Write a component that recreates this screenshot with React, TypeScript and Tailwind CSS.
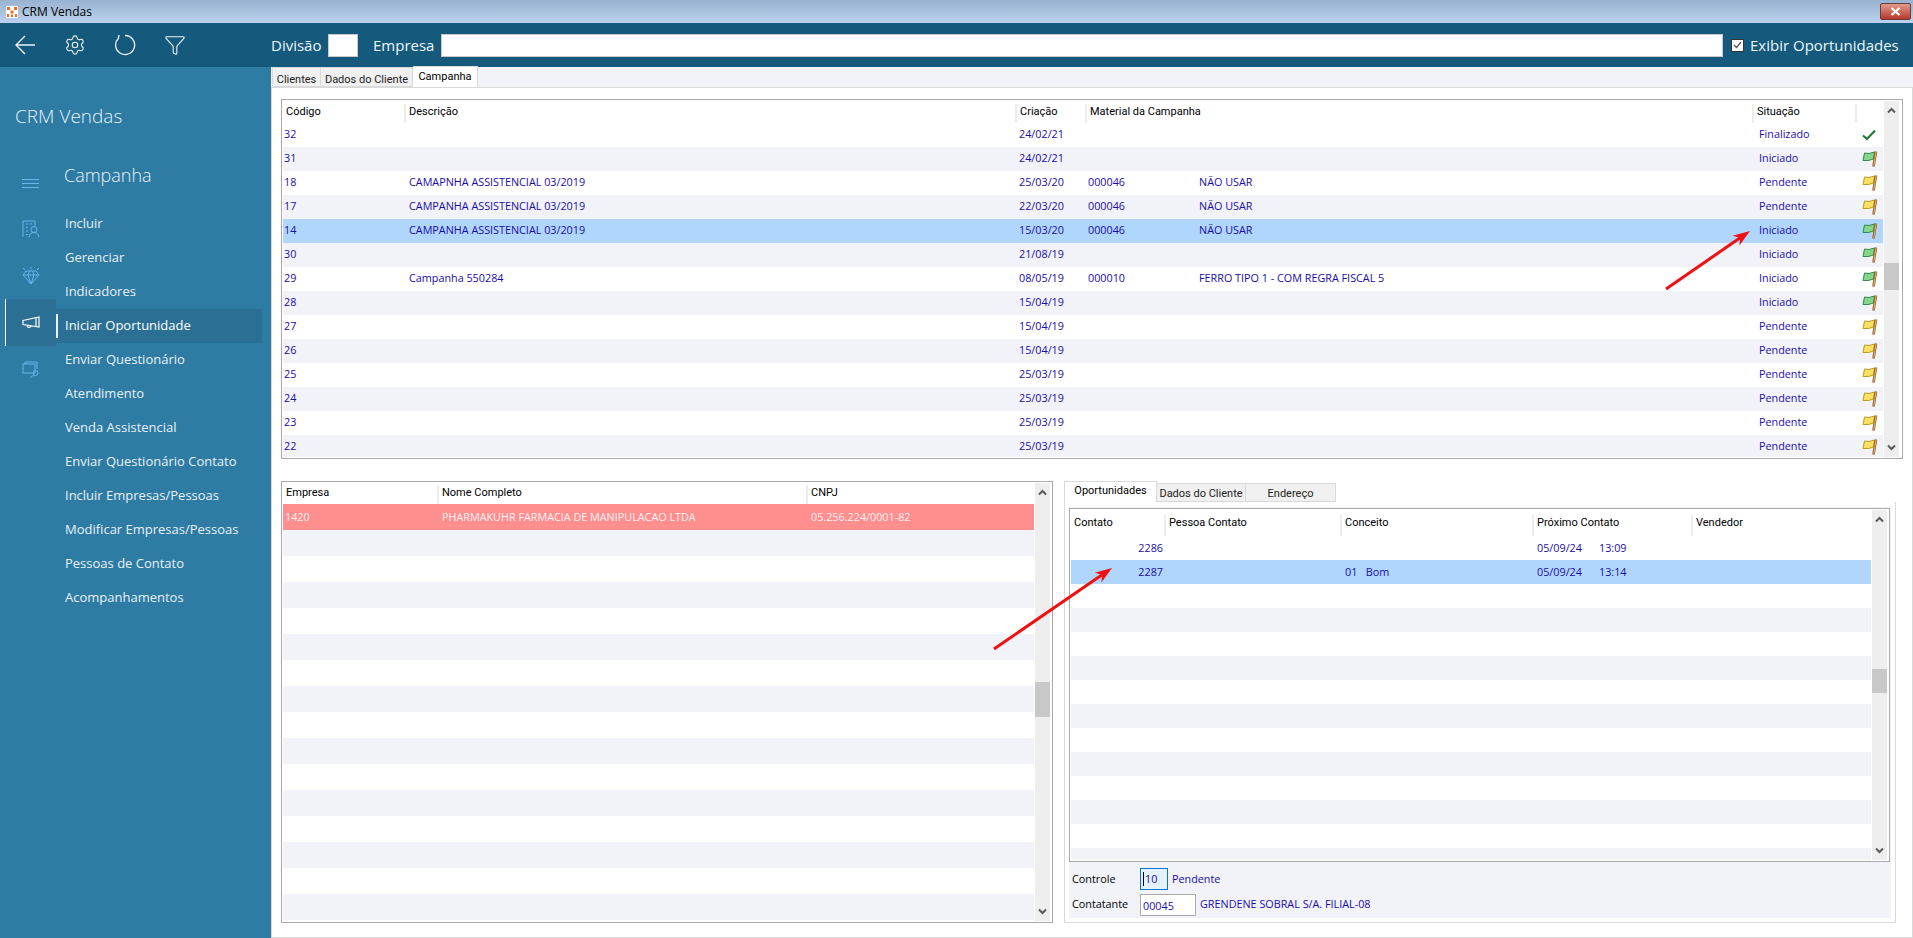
import React from "react";
import { Settings, Funnel } from "lucide-react";

const Flag = ({ color }: { color: "green" | "yellow" }) => (
  <svg width="16" height="16" viewBox="0 0 16 16" className="block">
    <path d="M2.500 2 L7 2.500 L12.500 1 L11.500 8 L6.500 9.500 L1 9.500 Z" fill={color === "green" ? "#86d68a" : "#f8e060"} stroke={color === "green" ? "#2f8a4d" : "#c09a20"} strokeWidth="1" />
    <path d="M14 .5 L11.500 15.500" stroke="#8a5a22" strokeWidth="2.600" />
    <path d="M14 1 L11.800 15" stroke="#eeb070" strokeWidth="1.100" />
  </svg>
);

const Check = () => (
  <svg width="14" height="12" viewBox="0 0 14 12" className="block">
    <path d="M1 6.500 L5 10 L13 1.500" fill="none" stroke="#1f7a2c" strokeWidth="2" />
  </svg>
);

const Chevron = ({ down }: { down?: boolean }) => (
  <svg width="9" height="7" viewBox="0 0 9 7" className="block mx-auto shrink-0">
    <path d={down ? "M1 1.500 L4.500 5 L8 1.500" : "M1 5.500 L4.500 2 L8 5.500"} fill="none" stroke="#5a5a5a" strokeWidth="2" />
  </svg>
);

const Scrollbar = ({ thumb }: { thumb: string }) => (
  <div className="w-[15px] h-full bg-[#eeeeee] flex flex-col shrink-0 pt-[6px] pb-[6px]">
    <Chevron />
    <div className={thumb + " bg-[#c8c8c8] w-full shrink-0"} />
    <div className="flex-1" />
    <Chevron down />
  </div>
);

const Head = ({ cols, labels, h }: { cols: string; labels: string[]; h: string }) => (
  <div className={"grid " + cols + " " + h + " bg-white text-black shrink-0 font-['Roboto',sans-serif] text-[11px]"}>
    {labels.map((l, i) => (
      <div key={i} className="border-r-2 border-[#ececec] pl-[3px] leading-[16px] whitespace-nowrap overflow-hidden last:border-r-0">{l}</div>
    ))}
  </div>
);

const rowTone = (i: number, selected?: boolean) =>
  selected ? "bg-[#b0d6fd]" : i % 2 === 1 ? "bg-[#f1f3f8]" : "bg-white";

type Camp = [string, string, string, string, string, string];
const campaigns: Camp[] = [
  ["32", "", "24/02/21", "", "", "Finalizado"],
  ["31", "", "24/02/21", "", "", "Iniciado"],
  ["18", "CAMAPNHA ASSISTENCIAL 03/2019", "25/03/20", "000046", "NÃO USAR", "Pendente"],
  ["17", "CAMPANHA ASSISTENCIAL 03/2019", "22/03/20", "000046", "NÃO USAR", "Pendente"],
  ["14", "CAMPANHA ASSISTENCIAL 03/2019", "15/03/20", "000046", "NÃO USAR", "Iniciado"],
  ["30", "", "21/08/19", "", "", "Iniciado"],
  ["29", "Campanha 550284", "08/05/19", "000010", "FERRO TIPO 1 - COM REGRA FISCAL 5", "Iniciado"],
  ["28", "", "15/04/19", "", "", "Iniciado"],
  ["27", "", "15/04/19", "", "", "Pendente"],
  ["26", "", "15/04/19", "", "", "Pendente"],
  ["25", "", "25/03/19", "", "", "Pendente"],
  ["24", "", "25/03/19", "", "", "Pendente"],
  ["23", "", "25/03/19", "", "", "Pendente"],
  ["22", "", "25/03/19", "", "", "Pendente"],
];

const menu = ["Incluir", "Gerenciar", "Indicadores", "Iniciar Oportunidade", "Enviar Questionário", "Atendimento", "Venda Assistencial", "Enviar Questionário Contato", "Incluir Empresas/Pessoas", "Modificar Empresas/Pessoas", "Pessoas de Contato", "Acompanhamentos"];

const railStroke = "#69b6ee";

const RailIcons = () => (
  <div className="w-[51px] ml-[5px] shrink-0 flex flex-col">
    <div className="h-[43px] flex items-center justify-center pt-[1px]">
      <svg width="18" height="10" viewBox="0 0 18 10" className="block"><path d="M0 .5H17M0 4.500H17M0 8.500H17" stroke={railStroke} /></svg>
    </div>
    <div className="h-[47px] flex items-center justify-center">
      <svg width="18" height="18" viewBox="0 0 18 18" className="block" fill="none" stroke={railStroke}><path d="M1 17V1H13V6M4 4h2M8 4h2M4 7.500h2M4 11h2M4 14.500h2" /><circle cx="12" cy="9.500" r="3" /><path d="M7 17c.5-3 2.500-4.500 5-4.500s4.500 1.500 5 4.500" /></svg>
    </div>
    <div className="h-[47px] flex items-center justify-center">
      <svg width="18" height="18" viewBox="0 0 18 18" className="block" fill="none" stroke={railStroke}><path d="M4 4H14L17 8L9 17L1 8ZM1 8H17M6 8L9 17L12 8M6 8L7.500 4M12 8L10.500 4" /><path d="M1 1L3 3M17 1L15 3M9 0V2" /></svg>
    </div>
    <div className="h-[47px] bg-[#2b6f94] border-l border-white flex items-center justify-center">
      <svg width="18" height="14" viewBox="0 0 18 14" className="block" fill="none" stroke="#ffffff" strokeWidth="1.200"><path d="M1 4.500L17 1V11L1 8.500ZM1 4.500V8.500M5 9.500C5 12 9 12 9 10M14 2V10.500" /></svg>
    </div>
    <div className="h-[47px] flex items-center justify-center">
      <svg width="18" height="18" viewBox="0 0 18 18" className="block" fill="none" stroke={railStroke}><path d="M3 3V1H15V8M1 3H13V12H1Z" /><circle cx="13.500" cy="12" r="2.500" /><path d="M11.500 14L8 17" /></svg>
    </div>
  </div>
);

const Sidebar = () => (
  <aside className="w-[271px] shrink-0 bg-[#2e7ba3] text-[#e8f2f7] flex flex-col">
    <div className="pl-[15px] pt-[35px] h-[95px] text-[19px] font-light leading-[28px]">CRM Vendas</div>
    <div className="flex">
      <RailIcons />
      <div className="flex-1 pr-[9px]">
        <div className="h-[45px] pl-[8px] text-[18px] font-light leading-[24px] pt-[1px]">Campanha</div>
        {menu.map((m, i) => (
          <div key={m} className={"h-[34px] leading-[32px] text-[13px] whitespace-nowrap " + (i === 3 ? "bg-[#2b6f94] text-white py-[5px] flex items-center" : "pl-[9px]")}>
            {i === 3 ? <><span className="w-[2px] h-[24px] bg-[#e8f2f7] mr-[7px]" /><span className="mb-[2px]">{m}</span></> : m}
          </div>
        ))}
      </div>
    </div>
  </aside>
);

const TopBar = () => (
  <div className="h-[44px] bg-[#155a7c] text-[#edf5f9] flex items-center shrink-0">
    <div className="w-[271px] shrink-0 flex items-center pl-[14px] gap-[28px]">
      <svg width="22" height="22" viewBox="0 0 22 22" className="block" fill="none" stroke="currentColor" strokeWidth="1.400"><path d="M21 11H2M11 2L2 11L11 20" /></svg>
      <Settings size={22} strokeWidth={1.200} />
      <svg width="22" height="22" viewBox="0 0 22 22" className="block" fill="none" stroke="currentColor" strokeWidth="1.300"><path d="M11 1.500A9.500 9.500 0 1 1 4.500 4.200M4.300 4.500L5 1" /></svg>
      <Funnel size={22} strokeWidth={1.200} />
    </div>
    <span className="text-[15px] w-[51px]">Divisão</span>
    <div className="ml-[6px] w-[30px] h-[23px] bg-white border border-[#c8c8c8]" />
    <span className="text-[15px] ml-[15px] w-[62px]">Empresa</span>
    <div className="ml-[6px] w-[1282px] h-[23px] bg-white border border-[#c8c8c8]" />
    <div className="ml-[8px] w-[13px] h-[13px] bg-white border border-[#333333] flex items-center justify-center">
      <svg width="9" height="8" viewBox="0 0 9 8" className="block"><path d="M1 4L3.500 6.500L8 1" fill="none" stroke="#555555" strokeWidth="1.300" /></svg>
    </div>
    <span className="text-[15px] ml-[6px] whitespace-nowrap">Exibir Oportunidades</span>
  </div>
);

const Tab = ({ label, active, cls }: { label: string; active?: boolean; cls: string }) => (
  <div className={cls + " text-center whitespace-nowrap font-['Roboto',sans-serif] text-[11px] border-r border-t border-[#d9d9d9] " + (active ? "bg-white text-black leading-[18px]" : "bg-[#f0f0f0] text-[#222222] leading-[20px] border-b")}>{label}</div>
);

const CampaignGrid = () => {
  const cols = "grid-cols-[123px_611px_70px_667px_103px_26px]";
  return (
    <div className="h-[360px] border border-[#a9a9a9] bg-white flex p-[1px] shrink-0">
      <div className="w-[1600px] flex flex-col overflow-hidden">
        <div className="h-[22px] pt-[3px] shrink-0">
          <Head cols={cols} h="h-[19px]" labels={["Código", "Descrição", "Criação", "Material da Campanha", "Situação", ""]} />
        </div>
        {campaigns.map((c, i) => (
          <div key={c[0]} className={"grid " + cols + " h-[24px] shrink-0 leading-[22px] text-[#1a0ca6] whitespace-nowrap " + rowTone(i, c[0] === "14")}>
            <div className="pl-[1px]">{c[0]}</div>
            <div className="pl-[3px]">{c[1]}</div>
            <div className="pl-[2px]">{c[2]}</div>
            <div className="flex"><span className="w-[112px] pl-[1px]">{c[3]}</span><span>{c[4]}</span></div>
            <div className="pl-[5px]">{c[5]}</div>
            <div className="flex items-center pl-[5px]">
              {c[5] === "Finalizado" ? <Check /> : <Flag color={c[5] === "Iniciado" ? "green" : "yellow"} />}
            </div>
          </div>
        ))}
      </div>
      <div className="ml-[1px]"><Scrollbar thumb="mt-[149px] h-[27px]" /></div>
    </div>
  );
};

const CompanyGrid = () => {
  const cols = "grid-cols-[156px_369px_226px]";
  return (
    <div className="w-[772px] h-full border border-[#a9a9a9] bg-white flex p-[1px] shrink-0">
      <div className="w-[751px] flex flex-col overflow-hidden">
        <div className="h-[21px] pt-[2px] shrink-0">
          <Head cols={cols} h="h-[19px]" labels={["Empresa", "Nome Completo", "CNPJ"]} />
        </div>
        <div className={"grid " + cols + " h-[26px] shrink-0 leading-[26px] bg-[#ff8f8f] text-[#fff0f0] whitespace-nowrap"}>
          <div className="pl-[2px]">1420</div>
          <div className="pl-[3px]">PHARMAKUHR FARMACIA DE MANIPULACAO LTDA</div>
          <div className="pl-[3px]">05.256.224/0001-82</div>
        </div>
        {Array.from({ length: 15 }).map((_, i) => (
          <div key={i} className={"h-[26px] shrink-0 " + rowTone(i + 1)} />
        ))}
      </div>
      <div className="ml-[1px]"><Scrollbar thumb="mt-[186px] h-[35px]" /></div>
    </div>
  );
};

const ContactGrid = () => {
  const cols = "grid-cols-[95px_176px_192px_159px_178px]";
  return (
    <div className="h-[354px] border border-[#a9a9a9] bg-white flex p-[1px] shrink-0">
      <div className="w-[800px] flex flex-col overflow-hidden">
        <div className="h-[26px] pt-[5px] shrink-0">
          <Head cols={cols} h="h-[21px]" labels={["Contato", "Pessoa Contato", "Conceito", "Próximo Contato", "Vendedor"]} />
        </div>
        <div className={"grid " + cols + " h-[24px] shrink-0 leading-[24px] text-[#1a0ca6] whitespace-nowrap bg-white"}>
          <div className="text-right pr-[3px]">2286</div><div /><div />
          <div className="pl-[3px] flex"><span className="w-[62px]">05/09/24</span><span>13:09</span></div><div />
        </div>
        <div className={"grid " + cols + " h-[24px] shrink-0 leading-[24px] text-[#1a0ca6] whitespace-nowrap bg-[#b0d6fd]"}>
          <div className="text-right pr-[3px]">2287</div><div />
          <div className="pl-[3px]">01&nbsp;&nbsp;&nbsp;Bom</div>
          <div className="pl-[3px] flex"><span className="w-[62px]">05/09/24</span><span>13:14</span></div><div />
        </div>
        {Array.from({ length: 12 }).map((_, i) => (
          <div key={i} className={"h-[24px] shrink-0 " + rowTone(i + 2)} />
        ))}
      </div>
      <div className="ml-[1px]"><Scrollbar thumb="mt-[146px] h-[24px]" /></div>
    </div>
  );
};

const ContactPanel = () => (
  <div className="w-[832px] h-full flex flex-col shrink-0">
    <div className="flex items-end h-[21px] shrink-0">
      <Tab label="Oportunidades" active cls="w-[93px] h-[21px] border-l" />
      <Tab label="Dados do Cliente" cls="w-[89px] h-[19px]" />
      <Tab label="Endereço" cls="w-[90px] h-[19px]" />
    </div>
    <div className="flex-1 border border-t-0 border-[#d9d9d9] bg-white p-[4px] pt-[5px] min-h-0">
      <div className="h-full bg-[#f1f3f8] flex flex-col pt-[1px] pr-[1px]">
        <ContactGrid />
        <div className="flex items-center h-[26px] mt-[4px] pl-[3px] text-black">
          <span className="w-[68px]">Controle</span>
          <div className="w-[28px] h-[22px] border border-[#0078d7] bg-[#e5f1fb] pl-[2px] leading-[18px] text-[#1a0ca6] flex items-center"><span className="w-[1px] h-[14px] bg-black mr-[1px]" />10</div>
          <span className="ml-[4px] text-[#1a0ca6]">Pendente</span>
        </div>
        <div className="flex items-center h-[25px] pl-[3px] text-black">
          <span className="w-[68px]">Contatante</span>
          <div className="w-[56px] h-[22px] border border-[#a9a9a9] bg-white pl-[2px] leading-[22px] text-[#1a0ca6]">00045</div>
          <span className="ml-[4px] text-[#1a0ca6]">GRENDENE SOBRAL S/A. FILIAL-08</span>
        </div>
      </div>
    </div>
  </div>
);

const Main = () => (
  <main className="flex-1 bg-[#f1f3f8] flex flex-col min-w-0 text-[10.8px]">
    <div className="flex h-[20px] shrink-0 items-end pl-[1px]">
      <Tab label="Clientes" cls="w-[49px] h-[20px] border-b pt-[2px] border-l" />
      <Tab label="Dados do Cliente" cls="w-[92px] h-[20px] border-b pt-[2px]" />
      <Tab label="Campanha" active cls="w-[65px] h-[21px] pt-[1px]" />
    </div>
    <div className="flex-1 bg-white border border-[#d9d9d9] px-[9px] pt-[11px] flex flex-col min-h-0">
      <CampaignGrid />
      <div className="flex gap-[11px] mt-[22px] h-[442px] shrink-0">
        <CompanyGrid />
        <ContactPanel />
      </div>
    </div>
  </main>
);

const Arrow = ({ x1, y1, x2, y2, cls }: { x1: number; y1: number; x2: number; y2: number; cls: string }) => {
  const a = Math.atan2(y2 - y1, x2 - x1);
  const bx = x2 - 17 * Math.cos(a);
  const by = y2 - 17 * Math.sin(a);
  const nx = -Math.sin(a) * 6;
  const ny = Math.cos(a) * 6;
  const mx = x2 - 12 * Math.cos(a);
  const my = y2 - 12 * Math.sin(a);
  return (
    <svg className={cls} width="1913" height="938" viewBox="0 0 1913 938">
      <line x1={x1} y1={y1} x2={mx} y2={my} stroke="#f01010" strokeWidth="3" />
      <path d={`M${x2} ${y2}L${bx + nx} ${by + ny}L${mx} ${my}L${bx - nx} ${by - ny}Z`} fill="#f01010" />
    </svg>
  );
};

export default function App() {
  return (
    <div className="relative w-[1913px] h-[938px] overflow-hidden flex flex-col bg-white font-['Open_Sans',sans-serif]">
      <div className="h-[23px] shrink-0 bg-gradient-to-b from-[#98b2d1] to-[#bad2ec] flex items-center pl-[6px] text-[12px] text-black">
        <svg width="12" height="12" viewBox="0 0 12 12" className="block bg-white"><path d="M1 1h3v3H1zM8 1h3v3H8zM4.500 4.500h3v3h-3zM1 8h2v3H1zM5 8.500h2V11H5zM9 8h2v3H9z" fill="#f06a1e" /></svg>
        <span className="ml-[4px]">CRM Vendas</span>
        <div className="ml-auto mr-[2px] w-[31px] h-[17px] rounded-[2px] border border-[#6b3b3b] bg-gradient-to-b from-[#e09a8c] to-[#b8352a] flex items-center justify-center">
          <svg width="11" height="9" viewBox="0 0 11 9" className="block"><path d="M1.500 1L9.500 8M9.500 1L1.500 8" stroke="#ffffff" strokeWidth="2.200" /></svg>
        </div>
      </div>
      <TopBar />
      <div className="flex flex-1 min-h-0">
        <Sidebar />
        <Main />
      </div>
      <Arrow cls="absolute top-0 left-0 pointer-events-none" x1={1666} y1={289} x2={1750} y2={231} />
      <Arrow cls="absolute top-0 left-0 pointer-events-none" x1={994} y1={649} x2={1112} y2={568} />
    </div>
  );
}
